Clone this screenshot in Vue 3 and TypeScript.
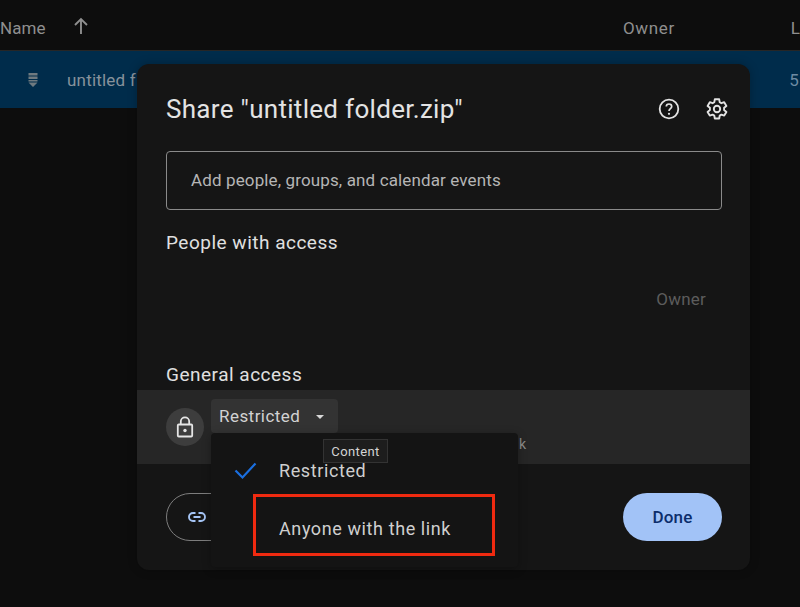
<script setup lang="ts">
const title = 'Share "untitled folder.zip"'
</script>

<template>
  <div class="page">
    <div class="head">
      <span class="name">Name</span>
      <svg class="arrow" width="24" height="24" viewBox="0 0 24 24"><path d="M12 20V5M6 11l6-6 6 6" fill="none" stroke="#8f8f8f" stroke-width="1.900"/></svg>
      <span class="owner">Owner</span>
      <span class="last">L</span>
    </div>
    <div class="row">
      <svg class="zip" width="12" height="14" viewBox="0 0 12 14"><path d="M1.500 0h9v2.500h-9zM1.500 3.500h9V6h-9zM1.500 7h9v1.500h-9zM1.500 9.500h9L6 14z" fill="#6f7a80"/></svg>
      <span class="file">untitled f</span>
      <span class="date">5</span>
    </div>

    <section class="dialog">
      <header class="top">
        <h1>{{ title }}</h1>
        <div class="icons">
          <svg width="24" height="24" viewBox="0 0 24 24"><circle cx="12" cy="12" r="9.300" fill="none" stroke="#e3e3e3" stroke-width="1.800"/><path d="M9.300 9.600c0-1.500 1.200-2.600 2.700-2.600s2.700 1 2.700 2.400c0 2.200-2.700 2.300-2.700 4.600" fill="none" stroke="#e3e3e3" stroke-width="1.700"/><circle cx="12" cy="16.800" r="1.100" fill="#e3e3e3"/></svg>
          <svg width="24" height="24" viewBox="0 0 24 24"><path d="M9.800 2.300h4.400l.5 2.900 1.700 1 2.800-1 2.200 3.700-2.300 1.900v2.200l2.300 1.900-2.200 3.700-2.800-1-1.700 1-.5 2.900H9.800l-.5-2.900-1.700-1-2.800 1-2.200-3.700 2.300-1.900v-2.200L2.600 8.900l2.200-3.700 2.800 1 1.700-1z" fill="none" stroke="#e3e3e3" stroke-width="1.900" stroke-linejoin="round"/><circle cx="12" cy="12" r="3.200" fill="none" stroke="#e3e3e3" stroke-width="1.900"/></svg>
        </div>
      </header>

      <div class="input">Add people, groups, and calendar events</div>

      <h2 class="people">People with access</h2>
      <div class="owner-line">Owner</div>

      <h2 class="general">General access</h2>
      <div class="access">
        <div class="lock">
          <svg width="24" height="24" viewBox="0 0 24 24"><path d="M7.800 9.500V6.500a4.200 4.200 0 0 1 8.400 0v3" fill="none" stroke="#e6e6e6" stroke-width="1.800"/><rect x="4.800" y="9.500" width="14.400" height="12" rx="1" fill="none" stroke="#e6e6e6" stroke-width="1.800"/><circle cx="12" cy="15.500" r="1.700" fill="#e6e6e6"/></svg>
        </div>
        <div class="select">
          <span>Restricted</span>
          <i class="caret"></i>
        </div>
        <span class="hint">k</span>
      </div>

      <footer class="foot">
        <button class="copy">
          <svg width="24" height="24" viewBox="0 0 24 24"><path d="M10.500 8H8a4 4 0 0 0 0 8h2.500M13.500 8H16a4 4 0 0 1 0 8h-2.500M8.500 12h7" fill="none" stroke="#a6c5f5" stroke-width="1.900"/></svg>
        </button>
        <button class="done">Done</button>
      </footer>

      <div class="menu">
        <div class="item">
          <svg class="check" width="24" height="24" viewBox="0 0 24 24"><path d="M2.500 12.500l7 7L22.500 5.500" fill="none" stroke="#1a6fe0" stroke-width="2.200"/></svg>
          <span>Restricted</span>
        </div>
        <div class="item"><span>Anyone with the link</span></div>
      </div>
      <div class="tooltip">Content</div>
      <div class="mark"></div>
    </section>
  </div>
</template>

<style>
html, body { margin: 0; background: #0d0d0d; }
</style>

<style scoped>
.page {
  position: relative;
  width: 800px;
  height: 607px;
  overflow: hidden;
  background: #0d0d0d;
  font-family: Roboto, "Liberation Sans", sans-serif;
}
.head {
  display: flex;
  align-items: center;
  height: 51px;
  padding-top: 6px;
  box-sizing: border-box;
  border-bottom: 1px solid #262626;
  color: #8f8f8f;
  font-size: 17px;
  letter-spacing: 0.1px;
}
.name { margin-left: 0; width: 70px; }
.arrow { margin: -5px 0 0 -1px; }
.owner { margin-left: 530px; width: 168px; letter-spacing: 0.7px; }
.row {
  display: flex;
  align-items: center;
  height: 57px;
  padding-top: 1px;
  box-sizing: border-box;
  background: #002c4b;
  color: #87929b;
  font-size: 17px;
  letter-spacing: 0.2px;
}
.zip { margin-left: 27px; }
.file { margin-left: 28px; }
.date { margin-left: auto; margin-right: 1px; color: #6d8ba3; }

.dialog {
  position: absolute;
  left: 137px;
  top: 64px;
  width: 613px;
  height: 506px;
  border-radius: 12px;
  background: #151515;
  box-shadow: 0 0 10px rgba(0, 0, 0, 0.25);
}
.top {
  display: flex;
  align-items: center;
  justify-content: space-between;
  height: 44px;
  padding: 23px 21px 0 29px;
}
h1 {
  margin: 0;
  font-size: 26px;
  font-weight: 400;
  color: #e3e3e3;
  letter-spacing: 0.3px;
}
.icons { display: flex; gap: 24px; }
.input {
  margin: 20px 28px 0 29px;
  height: 59px;
  box-sizing: border-box;
  padding: 0 0 2px 24px;
  display: flex;
  align-items: center;
  border: 1px solid #8a8a8a;
  border-radius: 4px;
  color: #b5b5b5;
  font-size: 17px;
  letter-spacing: 0.13px;
}
h2 {
  margin: 0;
  font-size: 19px;
  line-height: 24px;
  font-weight: 400;
  color: #e0e0e0;
  letter-spacing: 0.5px;
}
.people { margin: 21px 0 0 29px; }
.owner-line {
  margin: 34px 44px 0 0;
  line-height: 20px;
  text-align: right;
  color: #5c5c5c;
  font-size: 17px;
  letter-spacing: 0.2px;
}
.general { margin: 54px 0 0 29px; }
.access {
  position: relative;
  display: flex;
  margin-top: 3px;
  height: 74px;
  background: #262626;
}
.lock {
  display: flex;
  align-items: center;
  justify-content: center;
  width: 38px;
  height: 38px;
  margin: 18px 0 0 29px;
  border-radius: 50%;
  background: #3d3d3d;
}
.select {
  display: flex;
  align-items: center;
  width: 127px;
  height: 34px;
  box-sizing: border-box;
  margin: 9px 0 0 7px;
  padding-left: 8px;
  border-radius: 4px;
  background: #333;
  color: #d2d2d2;
  font-size: 17px;
  letter-spacing: 0.45px;
}
.caret {
  margin: 1px 0 0 16px;
  border: 4.500px solid transparent;
  border-top-color: #d8d8d8;
  border-bottom: 0;
}
.hint {
  position: absolute;
  left: 382px;
  top: 46px;
  color: #8c8c8c;
  font-size: 14px;
}
.foot {
  display: flex;
  justify-content: space-between;
  padding: 29px 28px 0 29px;
}
button {
  font-family: inherit;
  border: 0;
  height: 48px;
  border-radius: 24px;
  padding: 0;
}
.copy {
  width: 120px;
  height: 48px;
  box-sizing: border-box;
  padding-left: 18px;
  text-align: left;
  background: transparent;
  border: 1px solid #7d7d7d;
}
.copy svg { display: block; }
.done {
  width: 99px;
  background: #a2c3f7;
  color: #0c2d6b;
  font-size: 17px;
  font-weight: 500;
  letter-spacing: 0.2px;
}
.menu {
  position: absolute;
  left: 74px;
  top: 369px;
  width: 307px;
  height: 134px;
  box-sizing: border-box;
  padding-top: 8px;
  border-radius: 4px;
  background: #141414;
  box-shadow: 0 2px 10px rgba(0, 0, 0, 0.3);
  color: #cfcfcf;
  font-size: 18px;
  letter-spacing: 0.6px;
}
.item {
  position: relative;
  display: flex;
  align-items: center;
  height: 58px;
  padding-left: 68px;
}
.check { position: absolute; left: 22px; top: 17px; }
.tooltip {
  position: absolute;
  left: 186px;
  top: 375px;
  width: 65px;
  height: 24px;
  box-sizing: border-box;
  display: flex;
  align-items: center;
  justify-content: center;
  background: #1d1d1d;
  border: 1px solid #333;
  color: #d4d4d4;
  font-size: 13px;
  letter-spacing: 0.4px;
}
.mark {
  position: absolute;
  left: 116px;
  top: 430px;
  width: 242px;
  height: 62px;
  box-sizing: border-box;
  border: 3px solid #f02a10;
}
</style>
